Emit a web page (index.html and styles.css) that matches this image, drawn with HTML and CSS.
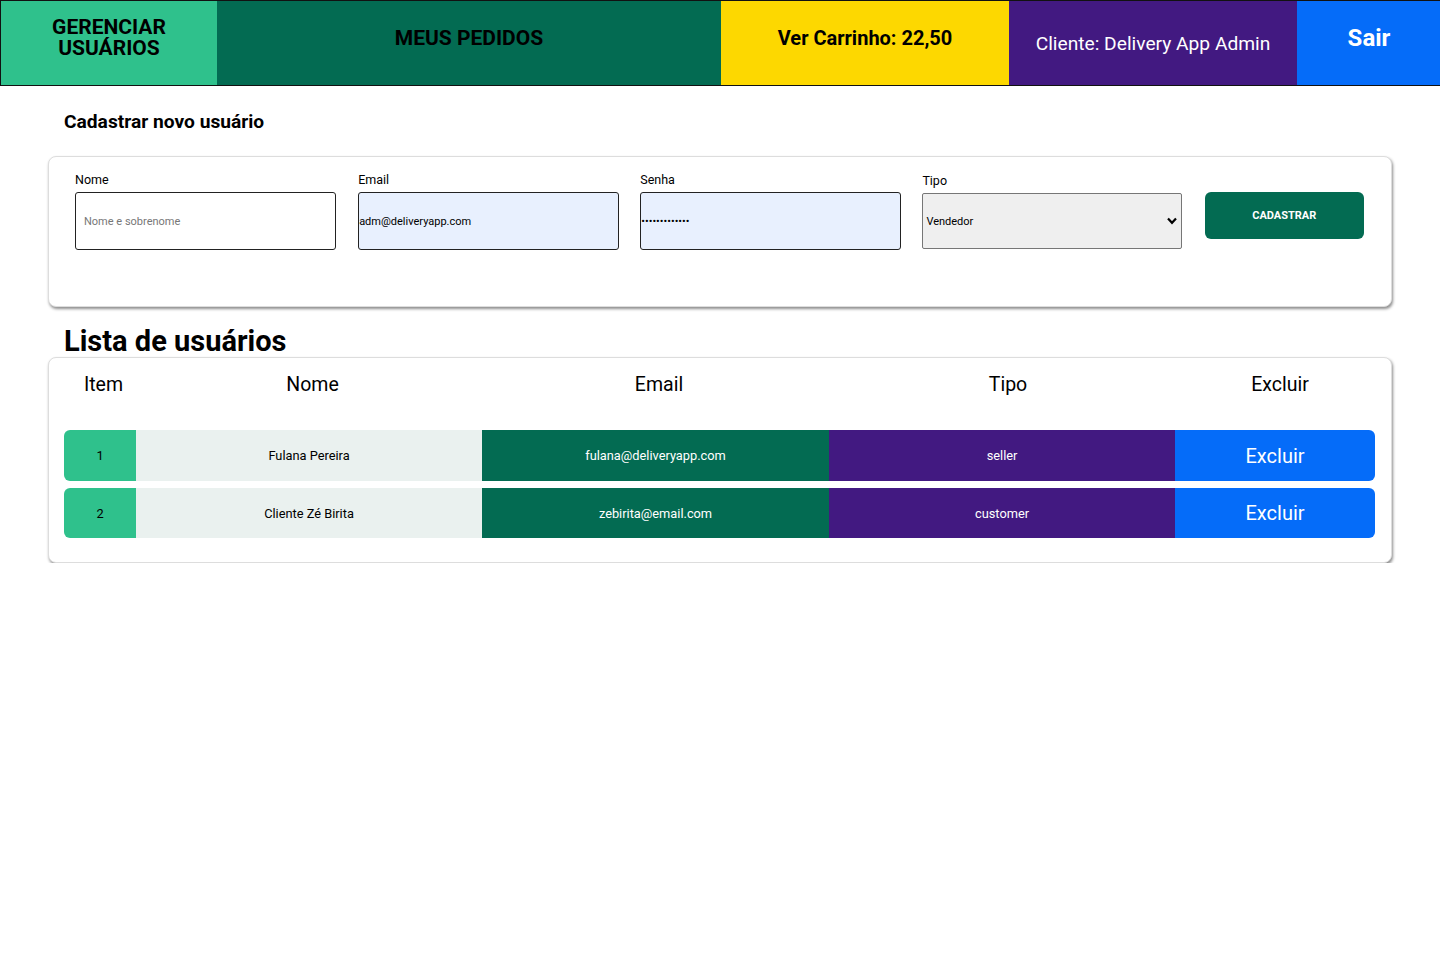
FILE: index.html
```html
<!DOCTYPE html>
<html lang="pt-BR">
<head>
<meta charset="utf-8">
<title>Delivery App - Admin</title>
<link rel="stylesheet" href="styles.css">
</head>
<body>
<header class="topbar">
  <a class="nav nav-users">GERENCIAR<br>USUÁRIOS</a>
  <a class="nav nav-orders">MEUS PEDIDOS</a>
  <a class="nav nav-cart">Ver Carrinho: 22,50</a>
  <div class="nav nav-client">Cliente: Delivery App Admin</div>
  <a class="nav nav-logout">Sair</a>
</header>

<main class="content">
  <h3 class="section-title">Cadastrar novo usuário</h3>
  <form class="card register-form">
    <label class="field field-first">
      <span class="field-label">Nome</span>
      <input class="text-input" type="text" placeholder="Nome e sobrenome">
    </label>
    <label class="field">
      <span class="field-label">Email</span>
      <input class="text-input autofilled" type="email" value="adm@deliveryapp.com">
    </label>
    <label class="field">
      <span class="field-label">Senha</span>
      <input class="text-input autofilled" type="password" value="adminpassword">
    </label>
    <label class="field field-select">
      <span class="field-label">Tipo</span>
      <span class="select-box">
        <span class="select-value">Vendedor</span>
        <svg class="chevron" width="10" height="8" viewBox="0 0 10 8"><path d="M1 1.5 L5 5.8 L9 1.5" fill="none" stroke="#000" stroke-width="2.2"/></svg>
      </span>
    </label>
    <button class="btn-register" type="button">CADASTRAR</button>
  </form>

  <h1 class="list-title">Lista de usuários</h1>
  <section class="card users-card">
    <div class="grid head-row">
      <div class="th">Item</div>
      <div class="th">Nome</div>
      <div class="th">Email</div>
      <div class="th th-role">Tipo</div>
      <div class="th th-del">Excluir</div>
    </div>
    <div class="grid user-row">
      <div class="td c-item">1</div>
      <div class="td c-name">Fulana Pereira</div>
      <div class="td c-email">fulana@deliveryapp.com</div>
      <div class="td c-role">seller</div>
      <button class="td c-del" type="button">Excluir</button>
    </div>
    <div class="grid user-row">
      <div class="td c-item">2</div>
      <div class="td c-name">Cliente Zé Birita</div>
      <div class="td c-email">zebirita@email.com</div>
      <div class="td c-role">customer</div>
      <button class="td c-del" type="button">Excluir</button>
    </div>
  </section>
</main>
</body>
</html>
```

FILE: styles.css
```css
* { box-sizing: border-box; }
html, body { margin: 0; padding: 0; }
body {
  font-family: Roboto, "Liberation Sans", Arial, sans-serif;
  color: #000;
  background: #fff;
}

/* ---------- top bar ---------- */
.topbar {
  box-sizing: content-box;
  width: 100%;
  height: 84px;
  border: 1px solid #111;
  display: flex;
}
.nav {
  display: flex;
  align-items: center;
  justify-content: center;
  text-align: center;
  font-size: 20px;
  font-weight: 700;
  line-height: 21px;
  text-decoration: none;
  padding-bottom: 10px;
}
.nav-users { width: 15%; background: #2fc18c; color: #000; font-size: 21px; line-height: 21.5px; }
.nav-orders { width: 35%; background: #036b52; color: #000; font-size: 21px; }
.nav-cart { width: 20%; background: #fdd800; color: #000; }
.nav-client { width: 20%; background: #421981; color: #fff; font-weight: 400; font-size: 19.2px; padding-bottom: 0; }
.nav-logout { width: 10%; background: #056cf9; color: #fff; font-size: 24px; padding-bottom: 10px; }

/* ---------- content ---------- */
.content {
  padding: 0 48px 0 48px;
}
.section-title {
  margin: 0;
  padding: 24px 0 0 16px;
  font-size: 19.2px;
  font-weight: 700;
  line-height: 24px;
}
.card {
  background: #fff;
  border: 1px solid #ddd;
  border-radius: 8px;
  box-shadow: 1px 2px 3px rgba(0, 0, 0, 0.45);
}

/* ---------- form ---------- */
.register-form {
  margin-top: 22px;
  height: 151px;
  display: flex;
  align-items: flex-start;
  padding: 15px 27px 0 26px;
}
.field {
  display: flex;
  flex-direction: column;
  width: 262px;
  margin-right: 21px;
}
.field-first { margin-right: 22px; }
.field-label {
  font-size: 12.5px;
  line-height: 16px;
  height: 16px;
  margin-bottom: 4px;
}
.text-input {
  height: 58px;
  width: 100%;
  border: 1px solid #222;
  border-radius: 3px;
  padding: 0 8px;
  font-family: Roboto, "Liberation Sans", Arial, sans-serif;
  font-size: 11px;
  color: #000;
  background: #fff;
}
.text-input::placeholder { color: #777; }
.text-input.autofilled { background: #e8f0fe; padding-left: 0; }
.field-select { width: 260px; margin-right: 23px; }
.field-select .field-label { margin-top: 1px; }
.select-box {
  height: 56px;
  border: 1px solid #767676;
  border-radius: 2px;
  background: #efefef;
  display: flex;
  align-items: center;
  justify-content: space-between;
  padding: 0 4px 0 3px;
  font-size: 11px;
}
.chevron { display: block; }
.btn-register {
  margin-top: 20px;
  width: 160px;
  height: 47px;
  border: none;
  border-radius: 6px;
  background: #036b52;
  color: #fff;
  font-family: Roboto, "Liberation Sans", Arial, sans-serif;
  font-size: 11px;
  font-weight: 700;
  padding-bottom: 2px;
}

/* ---------- list ---------- */
.list-title {
  margin: 0;
  padding: 17px 0 0 16px;
  font-size: 29px;
  font-weight: 700;
  line-height: 34px;
}
.users-card {
  margin-top: -1px;
  padding: 14px 16px 24px 15px;
}
.grid {
  display: grid;
  grid-template-columns: 72px 346px 347px 346px 200px;
}
.head-row { height: 26px; margin-bottom: 32px; }
.th {
  font-size: 19.5px;
  line-height: 26px;
  text-align: center;
  padding-left: 7px;
}
.th-role { padding-left: 12px; }
.th-del { padding-left: 10px; }
.user-row { height: 51px; margin-bottom: 7px; }
.user-row:last-child { height: 50px; margin-bottom: 0; }
.td {
  display: flex;
  align-items: center;
  justify-content: center;
  font-size: 12.8px;
}
.c-item { background: #2fc18c; border-radius: 6px 0 0 6px; }
.c-name { background: #eaf1ef; }
.c-email { background: #036b52; color: #fff; }
.c-role { background: #421981; color: #fff; }
.c-del {
  background: #056cf9;
  color: #fff;
  border: none;
  border-radius: 0 6px 6px 0;
  font-family: Roboto, "Liberation Sans", Arial, sans-serif;
  font-size: 20px;
  padding: 0;
}
```
